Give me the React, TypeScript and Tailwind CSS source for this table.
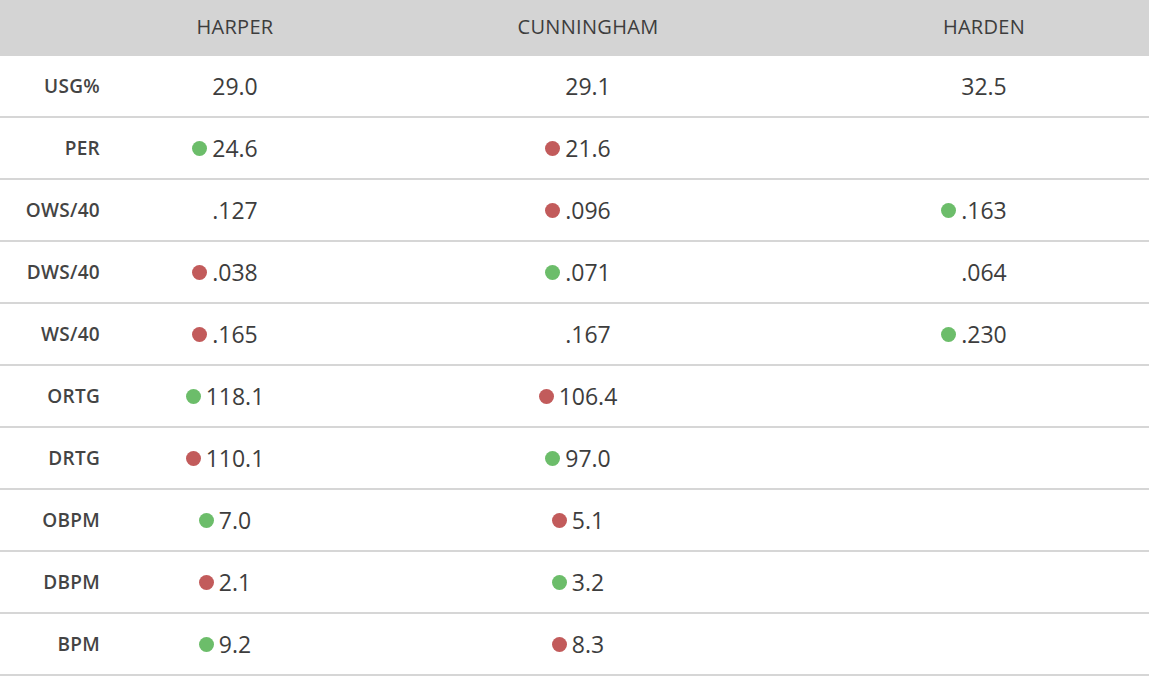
import * as React from "react";

type Mark = "g" | "r" | null;
type Cell = { v: string; m: Mark } | null;

const rows: { label: string; cells: Cell[] }[] = [
  { label: "USG%", cells: [{ v: "29.0", m: null }, { v: "29.1", m: null }, { v: "32.5", m: null }] },
  { label: "PER", cells: [{ v: "24.6", m: "g" }, { v: "21.6", m: "r" }, null] },
  { label: "OWS/40", cells: [{ v: ".127", m: null }, { v: ".096", m: "r" }, { v: ".163", m: "g" }] },
  { label: "DWS/40", cells: [{ v: ".038", m: "r" }, { v: ".071", m: "g" }, { v: ".064", m: null }] },
  { label: "WS/40", cells: [{ v: ".165", m: "r" }, { v: ".167", m: null }, { v: ".230", m: "g" }] },
  { label: "ORTG", cells: [{ v: "118.1", m: "g" }, { v: "106.4", m: "r" }, null] },
  { label: "DRTG", cells: [{ v: "110.1", m: "r" }, { v: "97.0", m: "g" }, null] },
  { label: "OBPM", cells: [{ v: "7.0", m: "g" }, { v: "5.1", m: "r" }, null] },
  { label: "DBPM", cells: [{ v: "2.1", m: "r" }, { v: "3.2", m: "g" }, null] },
  { label: "BPM", cells: [{ v: "9.2", m: "g" }, { v: "8.3", m: "r" }, null] },
];

const cols = "grid grid-cols-[113px_244px_462px_330px]";

function Value({ cell }: { cell: Cell }) {
  if (!cell) return <div />;
  return (
    <div className="flex items-center justify-center">
      {cell.m && (
        <span
          className={
            "-ml-[20px] mr-[5px] w-[15px] h-[15px] rounded-full " +
            (cell.m === "g" ? "bg-[#6cbd6a]" : "bg-[#c25b5b]")
          }
        />
      )}
      <span className="text-[23px] text-[#3d3d3d] leading-none">{cell.v}</span>
    </div>
  );
}

export default function App() {
  return (
    <div className="w-[1149px] h-[693px] bg-white" style={{ fontFamily: '"Open Sans", sans-serif' }}>
      <div className={cols + " h-[56px] bg-[#d4d4d4] items-center"}>
        <div />
        {["HARPER", "CUNNINGHAM", "HARDEN"].map((h) => (
          <div key={h} className="text-center text-[20px] tracking-[0.3px] text-[#3d3d3d] -mt-[3px]">
            {h}
          </div>
        ))}
      </div>
      {rows.map((r) => (
        <div key={r.label} className={cols + " h-[62px] items-center border-b-2 border-[#d6d6d6]"}>
          <div className="text-right pr-[13px] text-[19px] font-semibold tracking-[0.3px] text-[#444]">
            {r.label}
          </div>
          {r.cells.map((c, i) => (
            <Value key={i} cell={c} />
          ))}
        </div>
      ))}
    </div>
  );
}
